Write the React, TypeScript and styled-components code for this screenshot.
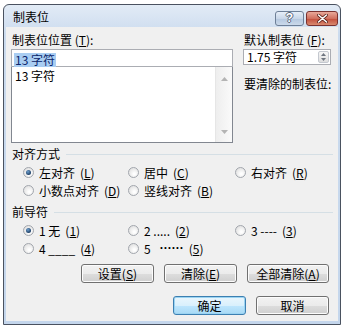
import React from "react";
import styled, { createGlobalStyle } from "styled-components";

const GlobalStyle = createGlobalStyle`
	body {
		margin: 0;
		background: #ffffff;
		font-family: "Noto Sans CJK SC", "Liberation Sans", sans-serif;
		font-size: 12px;
		color: #000000;
	}
`;

const SWindow = styled.div`
	margin: 4px 0 0 3px;
	width: 338px;
	height: 321px;
	box-sizing: border-box;
	border: 1px solid #4a5260;
	border-radius: 6px 6px 0 0;
	background: linear-gradient(#e2ebf6, #cbdbee 30px, #c4d6ec);
	display: flex;
	flex-direction: column;
	padding: 0 2px 3px 2px;
`;

const STitleBar = styled.div`
	height: 22px;
	display: flex;
	align-items: center;
	padding-left: 7px;
	.title {
		flex: 1;
		line-height: 14px;
		margin-top: 2px;
	}
`;

const SCaptionButton = styled.div<{ $close?: boolean }>`
	width: ${(p) => (p.$close ? 32 : 29)}px;
	height: 15px;
	margin-top: 4px;
	margin-right: ${(p) => (p.$close ? 0 : 2)}px;
	box-sizing: border-box;
	border: 1px solid ${(p) => (p.$close ? "#7a3230" : "#6d7f97")};
	border-radius: 3px;
	background: ${(p) =>
		p.$close
			? "linear-gradient(#e9a99a, #d0705f 50%, #c24c3a 51%, #d98a6f)"
			: "linear-gradient(#e6eef8, #c9d7e9 50%, #b4c7df 51%, #cbd9ea)"};
	display: flex;
	align-items: center;
	justify-content: center;
	color: #ffffff;
	font-family: "Liberation Sans", sans-serif;
	font-weight: bold;
	font-size: 12px;
	line-height: 12px;
	text-shadow: 1px 0 0 #56657a, -1px 0 0 #56657a, 0 1px 0 #56657a, 0 -1px 0 #56657a;
`;

const SClient = styled.div`
	flex: 1;
	background: #f0f0f0;
	padding: 6px 5px 0 5px;
	display: flex;
	flex-direction: column;
`;

const STopSection = styled.div`
	display: flex;
	gap: 10px;
`;

const SColumn = styled.div<{ $width: number }>`
	width: ${(p) => p.$width}px;
	display: flex;
	flex-direction: column;
`;

const SLabel = styled.div<{ $mt?: number }>`
	height: 14px;
	line-height: 14px;
	padding-left: 1px;
	margin-top: ${(p) => p.$mt || 0}px;
	white-space: nowrap;
`;

const SInput = styled.div`
	margin-top: 2px;
	height: 18px;
	box-sizing: border-box;
	border: 1px solid #abadb3;
	background: #ffffff;
	padding: 1px 2px;
	.sel {
		background: #a9cdf2;
		line-height: 14px;
		display: inline-block;
		padding: 0 1px;
		color: #0a246a;
	}
`;

const SList = styled.div`
	height: 76px;
	box-sizing: border-box;
	border: 1px solid #828790;
	border-top: none;
	background: #ffffff;
	display: flex;
	.items {
		flex: 1;
		padding: 2px 3px;
		line-height: 14px;
	}
`;

const SScrollBar = styled.div`
	width: 16px;
	background: linear-gradient(90deg, #eeeeee, #fafafa);
	border-left: 1px solid #e6e6e6;
	display: flex;
	flex-direction: column;
	justify-content: space-between;
	align-items: center;
	padding: 10px 0 8px;
`;

const SSpinner = styled.div`
	margin-top: 2px;
	height: 16px;
	box-sizing: border-box;
	border: 1px solid #abadb3;
	background: #ffffff;
	display: flex;
	.value {
		flex: 1;
		padding-left: 3px;
		line-height: 14px;
		white-space: nowrap;
	}
`;

const SSpinButtons = styled.div`
	width: 11px;
	flex-shrink: 0;
	margin: 1px;
	box-sizing: border-box;
	border: 1px solid #c4c8cf;
	border-radius: 2px;
	background: linear-gradient(#f6f6f6, #dedede);
	display: flex;
	flex-direction: column;
	align-items: center;
	justify-content: space-around;
`;

const SGroupHeader = styled.div<{ $mt: number }>`
	margin-top: ${(p) => p.$mt}px;
	height: 14px;
	line-height: 14px;
	display: flex;
	align-items: center;
	padding-left: 1px;
	.line {
		flex: 1;
		height: 1px;
		background: #d5dfe5;
		margin: 1px 0 0 6px;
	}
`;

const SRadioGrid = styled.div`
	margin-top: 2px;
	padding-left: 12px;
	display: grid;
	grid-template-columns: 105px 107px 1fr;
	grid-auto-rows: 18px;
`;

const SRadio = styled.div<{ $checked?: boolean }>`
	display: flex;
	align-items: center;
	gap: 5px;
	white-space: nowrap;
	.dot {
		flex-shrink: 0;
		width: 11px;
		height: 11px;
		box-sizing: border-box;
		border-radius: 50%;
		border: 1px solid #a2a6ad;
		background: radial-gradient(circle at 60% 65%, #ffffff 10%, #dcdcdc 90%);
		display: flex;
		align-items: center;
		justify-content: center;
	}
	.dot::after {
		content: "";
		display: ${(p) => (p.$checked ? "block" : "none")};
		width: 5px;
		height: 5px;
		border-radius: 50%;
		background: radial-gradient(circle at 40% 35%, #6fa0cf, #1d3f66 70%);
	}
	.dots {
		font-family: "Liberation Sans", sans-serif;
		font-weight: bold;
		margin-left: 4px;
	}
`;

const SButtonRow = styled.div<{ $mt: number }>`
	margin-top: ${(p) => p.$mt}px;
	display: flex;
	justify-content: flex-end;
	gap: 10px;
	padding-right: 4px;
`;

const SButton = styled.div<{ $width: number; $default?: boolean }>`
	width: ${(p) => p.$width}px;
	height: 19px;
	box-sizing: border-box;
	border: 1px solid ${(p) => (p.$default ? "#3c7fb1" : "#707070")};
	border-radius: 3px;
	background: ${(p) =>
		p.$default
			? "linear-gradient(#eaf6fd, #d9f0fc 50%, #bee6fd 51%, #a7d9f5)"
			: "linear-gradient(#f2f2f2, #ebebeb 50%, #dddddd 51%, #cfcfcf)"};
	box-shadow: inset 0 0 0 1px ${(p) => (p.$default ? "#9bd4f2" : "#fcfcfc")};
	display: flex;
	align-items: center;
	justify-content: center;
	line-height: 14px;
	white-space: nowrap;
`;

const Key = ({ k }: { k: string }) => (
	<span>
		{" "}(<u>{k}</u>)
	</span>
);

const Arrow = ({ up, w, h, color }: { up?: boolean; w: number; h: number; color: string }) => (
	<svg width={w} height={h} viewBox={`0 0 ${w} ${h}`}>
		<polygon
			points={up ? `0,${h} ${w / 2},0 ${w},${h}` : `0,0 ${w / 2},${h} ${w},0`}
			fill={color}
		/>
	</svg>
);

const CloseGlyph = () => (
	<svg width="11" height="9" viewBox="0 0 11 9">
		<path d="M1.5 1 L9.5 8 M9.5 1 L1.5 8" stroke="#5a2018" strokeWidth="3" strokeLinecap="round" />
		<path d="M1.5 1 L9.5 8 M9.5 1 L1.5 8" stroke="#ffffff" strokeWidth="1.6" strokeLinecap="round" />
	</svg>
);

export default function App() {
	return (
		<>
			<GlobalStyle />
			<SWindow>
				<STitleBar>
					<span className="title">制表位</span>
					<SCaptionButton>?</SCaptionButton>
					<SCaptionButton $close>
						<CloseGlyph />
					</SCaptionButton>
				</STitleBar>
				<SClient>
					<STopSection>
						<SColumn $width={222}>
							<SLabel>
								制表位位置<Key k="T" />:
							</SLabel>
							<SInput>
								<span className="sel">13 字符</span>
							</SInput>
							<SList>
								<div className="items">13 字符</div>
								<SScrollBar>
									<Arrow up w={7} h={4} color="#b4b4b4" />
									<Arrow w={7} h={4} color="#b4b4b4" />
								</SScrollBar>
							</SList>
						</SColumn>
						<SColumn $width={88}>
							<SLabel>
								默认制表位<Key k="F" />:
							</SLabel>
							<SSpinner>
								<span className="value">1.75 字符</span>
								<SSpinButtons>
									<Arrow up w={5} h={3} color="#6f7680" />
									<Arrow w={5} h={3} color="#6f7680" />
								</SSpinButtons>
							</SSpinner>
							<SLabel $mt={12}>要清除的制表位:</SLabel>
						</SColumn>
					</STopSection>

					<SGroupHeader $mt={4}>
						对齐方式<span className="line" />
					</SGroupHeader>
					<SRadioGrid>
						<SRadio $checked><span className="dot" />左对齐<Key k="L" /></SRadio>
						<SRadio><span className="dot" />居中<Key k="C" /></SRadio>
						<SRadio><span className="dot" />右对齐<Key k="R" /></SRadio>
						<SRadio><span className="dot" />小数点对齐<Key k="D" /></SRadio>
						<SRadio><span className="dot" />竖线对齐<Key k="B" /></SRadio>
					</SRadioGrid>

					<SGroupHeader $mt={6}>
						前导符<span className="line" />
					</SGroupHeader>
					<SRadioGrid>
						<SRadio $checked><span className="dot" />1 无<Key k="1" /></SRadio>
						<SRadio><span className="dot" />2 .....<Key k="2" /></SRadio>
						<SRadio><span className="dot" />3 ----<Key k="3" /></SRadio>
						<SRadio><span className="dot" />4 ____<Key k="4" /></SRadio>
						<SRadio>
							<span className="dot" />5<span className="dots">······</span>
							<Key k="5" />
						</SRadio>
					</SRadioGrid>

					<SButtonRow $mt={7}>
						<SButton $width={73}>设置<Key k="S" /></SButton>
						<SButton $width={73}>清除<Key k="E" /></SButton>
						<SButton $width={82}>全部清除<Key k="A" /></SButton>
					</SButtonRow>
					<SButtonRow $mt={13}>
						<SButton $width={73} $default>确定</SButton>
						<SButton $width={73}>取消</SButton>
					</SButtonRow>
				</SClient>
			</SWindow>
		</>
	);
}
